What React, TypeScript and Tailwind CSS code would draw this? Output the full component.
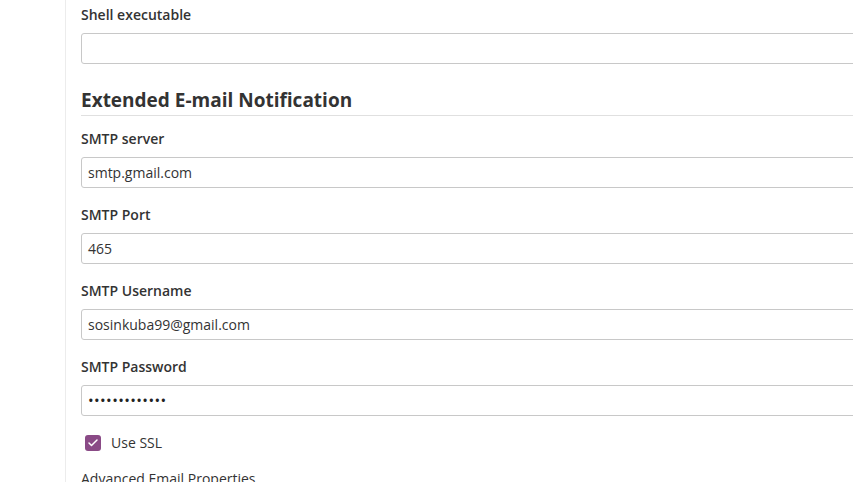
import { Check } from "lucide-react";

const fields = [
  { label: "SMTP server", value: "smtp.gmail.com" },
  { label: "SMTP Port", value: "465" },
  { label: "SMTP Username", value: "sosinkuba99@gmail.com" },
  { label: "SMTP Password", value: "•••••••••••••", password: true },
];

function Field({ label, value, password }: { label: string; value: string; password?: boolean }) {
  return (
    <div className="mb-4">
      <div className="text-[14px] leading-5 pt-[1px] font-semibold text-[#333]">{label}</div>
      <div className="mt-[8px] h-[31px] w-[820px] border border-[#c8c8c8] rounded-[3px] bg-white flex items-center px-[6px]">
        <span className={password ? "text-[15px] tracking-[0.4px] text-[#222]" : "text-[14px] text-[#333]"}>{value}</span>
      </div>
    </div>
  );
}

export default function App() {
  return (
    <div className="w-[853px] h-[482px] overflow-hidden bg-white flex font-['Open_Sans','Noto_Sans',sans-serif]">
      {/* Sidebar */}
      <div className="w-[66px] shrink-0 border-r border-[#ececec]" />

      {/* Main */}
      <div className="flex-1 pl-[15px] pt-[4px] overflow-hidden">
        <div className="mb-[22px]">
          <div className="text-[14px] leading-5 pt-[1px] font-semibold text-[#333]">Shell executable</div>
          <div className="mt-[8px] h-[31px] w-[820px] border border-[#c8c8c8] rounded-[3px] bg-white" />
        </div>

        <h2 className="text-[19px] leading-7 font-bold text-[#333] pb-[1px] border-b border-[#e0e0e0] mb-[12px] w-[800px]">
          Extended E-mail Notification
        </h2>

        {fields.map((f) => (
          <Field key={f.label} label={f.label} value={f.value} password={f.password} />
        ))}

        <div className="flex items-center gap-[10px] pl-[4px] mt-[2px]">
          <div className="w-4 h-4 rounded-[3px] bg-[#8a4a86] flex items-center justify-center">
            <Check className="w-3 h-3 text-white" strokeWidth={3} />
          </div>
          <span className="text-[14px] text-[#333]">Use SSL</span>
        </div>

        <div className="mt-[16px] text-[14px] leading-5 text-[#333]">Advanced Email Properties</div>
      </div>
    </div>
  );
}
